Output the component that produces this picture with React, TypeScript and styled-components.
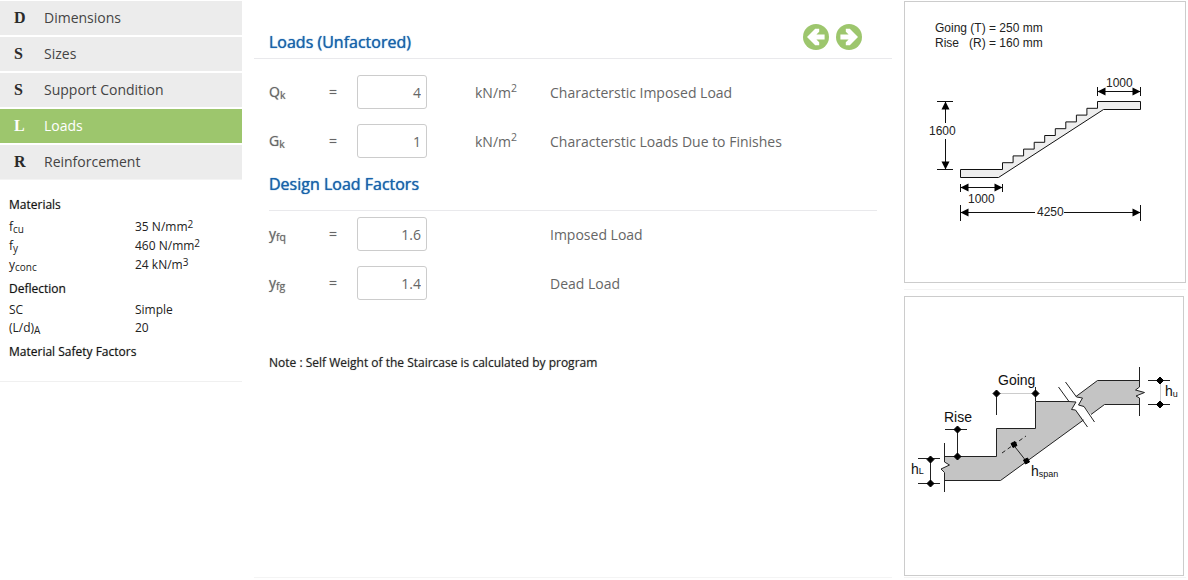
import React from "react";
import styled, { createGlobalStyle, css } from "styled-components";

const GlobalStyle = createGlobalStyle`
  *, *::before, *::after { box-sizing: border-box; }
  body {
    margin: 0;
    background: #fff;
    color: #666;
    font: 14px/20px "Open Sans", "Liberation Sans", sans-serif;
  }
  sub, sup { position: relative; font-size: 75%; line-height: 0; vertical-align: baseline; }
  sub { top: 2px; }
  sup { top: -6px; }
`;

const emphasis = css`
  font-weight: 400;
  text-shadow: 0 0 1px currentColor;
`;

const softEmphasis = css`
  font-weight: 400;
  text-shadow: 0 0 1px rgba(0, 0, 0, 0.4);
`;

const Page = styled.div`
  display: grid;
  grid-template-columns: 242px minmax(0, 1fr) 282px;
  gap: 12px;
  padding: 1px 2px 0 0;
`;

const Sidebar = styled.aside`
  min-width: 0;
`;

const Nav = styled.nav`
  display: flex;
  flex-direction: column;
  gap: 2px;
  border-bottom: 1px solid #f4f4f4;
`;

const NavLink = styled.a<{ $active?: boolean }>`
  display: grid;
  grid-template-columns: 30px 1fr;
  align-items: center;
  height: 34px;
  padding: 0 14px;
  background: ${(p) => (p.$active ? "#9dc66d" : "#ececec")};
  color: ${(p) => (p.$active ? "#fff" : "#444")};
  text-decoration: none;
`;

const Initial = styled.b<{ $active?: boolean }>`
  font: bold 16px/20px "Liberation Serif", serif;
  color: ${(p) => (p.$active ? "#fff" : "#2a2a2a")};
`;

const Summary = styled.div`
  padding: 10px 9px 17px;
  border-bottom: 1px solid #f0f0f0;
  color: #222;
  font-size: 12px;
  sup { top: -3px; }
  sub, sup { font-size: 10px; }
`;

const SummaryTitle = styled.h3`
  margin: 0;
  padding-top: 3px;
  font-size: 12px;
  line-height: 24px;
  color: #111;
  ${softEmphasis}
`;

const SummaryTable = styled.table<{ $row: number }>`
  width: 100%;
  border-collapse: collapse;
  line-height: ${(p) => p.$row}px;
  th, td { padding: 0; font-weight: 400; text-align: left; }
  th { width: 126px; }
`;

const Main = styled.main`
  border-bottom: 1px solid #f4f4f4;
`;

const MainHeader = styled.header`
  display: flex;
  align-items: flex-start;
  justify-content: space-between;
  height: 58px;
  padding: 23px 30px 0 15px;
  border-bottom: 1px solid #e9e9ec;
`;

const Title = styled.h2`
  margin: 0;
  padding-top: 6px;
  font-size: 16px;
  line-height: 24px;
  color: #1763ab;
  ${emphasis}
`;

const Pager = styled.div`
  display: flex;
  gap: 7px;
`;

const PagerButton = styled.button`
  width: 26px;
  height: 26px;
  padding: 0;
  border: 0;
  background: none;
  cursor: pointer;
  svg { display: block; }
`;

const Section = styled.section`
  padding: 0 15px;
`;

const SectionTitle = styled(Title)`
  padding: 14px 0;
  border-bottom: 1px solid #e9e9ec;
`;

const Fields = styled.div<{ $top: number }>`
  display: grid;
  gap: 15px;
  padding-top: ${(p) => p.$top}px;
`;

const FieldRow = styled.div`
  display: grid;
  grid-template-columns: 60px 28px 70px 75px 1fr;
  align-items: center;
`;

const FieldLabel = styled.label`
  ${softEmphasis}
`;

const NumberInput = styled.input`
  width: 70px;
  height: 34px;
  padding: 0 5px;
  border: 1px solid #ccc;
  border-radius: 3px;
  background: #fff;
  color: #666;
  font: inherit;
  text-align: right;
`;

const Unit = styled.span`
  padding: 2px 0 0 48px;
  white-space: nowrap;
`;

const Description = styled.span`
  padding: 2px 0 0 48px;
`;

const Note = styled.p`
  margin: 53px 0 0;
  font-size: 12px;
  color: #222;
  ${softEmphasis}
`;

const Figures = styled.aside`
  display: flex;
  flex-direction: column;
`;

const Figure = styled.figure`
  margin: 0;
  border: 1px solid #ccc;
  svg { display: block; width: 100%; height: auto; }
`;

const FigureSlot = styled.div<{ $inset?: boolean }>`
  padding: ${(p) => (p.$inset ? "6px 2px 1px 0" : "0 0 6px")};
  border-bottom: 1px solid #f4f4f4;
`;

const navItems = ["Dimensions", "Sizes", "Support Condition", "Loads", "Reinforcement"];

const ArrowIcon = ({ flip }: { flip?: boolean }) => (
  <svg width="26" height="26" viewBox="0 0 26 26" aria-hidden="true">
    <circle cx="13" cy="13" r="13" fill="#9dc66d" />
    <path
      transform={flip ? "matrix(-1 0 0 1 26 0)" : undefined}
      fill="#fff"
      d="M4 13L12.2 4.8H16.2V7.8L13.4 10.6H21.6V15.4H13.4L16.2 18.2V21.2H12.2Z"
    />
  </svg>
);

type FieldProps = { id: string; symbol: string; sub: string; value: string; unit?: boolean; text: string };

const Field = ({ id, symbol, sub, value, unit, text }: FieldProps) => (
  <FieldRow>
    <FieldLabel htmlFor={id}>
      {symbol}
      <sub>{sub}</sub>
    </FieldLabel>
    <FieldLabel as="span">=</FieldLabel>
    <NumberInput id={id} defaultValue={value} inputMode="decimal" />
    <Unit>{unit && <>kN/m<sup>2</sup></>}</Unit>
    <Description>{text}</Description>
  </FieldRow>
);

const steps = Array.from({ length: 10 }, (_, i) => {
  const x = 97.5 + i * (95 / 9);
  const y = 167.5 - (i + 1) * 6.8;
  return `V${y.toFixed(1)}H${(i === 9 ? 235.5 : x + 95 / 9).toFixed(1)}`;
}).join("");

const StairElevation = () => (
  <svg viewBox="0 0 280 280" role="img" aria-label="Staircase elevation" fontFamily="'Liberation Sans', sans-serif" fontSize="12" fill="#222">
    <text x="30" y="30">Going (T) = 250 mm</text>
    <text x="30" y="45">{"Rise\u00a0\u00a0\u00a0(R) = 160 mm"}</text>
    <path d={`M55.5 167.5H97.5${steps}V107.5H198.5L93.5 175.5H55.5Z`} fill="#eee" stroke="#111" />
    <g stroke="#111" fill="none">
      <path d="M192.5 85V94M235.5 85V94M192.5 89.5H235.5" />
      <path d="M32 99.5H48M32 167.5H48M40.5 99.5V121M40.5 137V167.5" />
      <path d="M55.5 182V190M97.5 182V190M55.5 185.5H97.5" />
      <path d="M55.5 203V219M235.5 203V219M55.5 210.5H130M159 210.5H235.5" />
    </g>
    <g fill="#000">
      <path d="M192.5 89.5l8-4v8zM235.5 89.5l-8-4v8z" />
      <path d="M40.5 99.5l-4 8h8zM40.5 167.5l-4-8h8z" />
      <path d="M55.5 185.5l8-4v8zM97.5 185.5l-8-4v8z" />
      <path d="M55.5 210.5l8-4v8zM235.5 210.5l-8-4v8z" />
    </g>
    <text x="201" y="85">1000</text>
    <text x="24" y="133">1600</text>
    <text x="63" y="201">1000</text>
    <text x="132" y="214">4250</text>
  </svg>
);

const Dot = ({ x, y }: { x: number; y: number }) => (
  <path d={`M${x - 3.5} ${y}L${x} ${y - 3.5}L${x + 3.5} ${y}L${x} ${y + 3.5}Z`} fill="#000" strokeLinejoin="round" />
);

const StairDetail = () => (
  <svg viewBox="0 0 278 278" role="img" aria-label="Staircase detail" fontFamily="'Liberation Sans', sans-serif" fill="#111">
    <path fill="#c4c4c4" d="M39.5 159.5H91.5V131.5H130.5V104.5H164L171 105L166.5 112.5L170.5 113L178.5 123L95.5 183.5H39.5V175.5L36 172L44.5 168L39.5 165Z" />
    <path fill="#c4c4c4" d="M171 99.5L192.5 83.5H234.5V90L230.5 93L239.5 95.5L231 99L234.5 101V107.5H199.5L186 117.5L179 109.5L173.5 108L177.5 101Z" />
    <g stroke="#222" fill="none">
      <path d="M39.5 159.5H91.5V131.5H130.5V104.5H164M39.5 183.5H95.5L178.5 123M171 99.5L192.5 83.5H234.5M186 117.5L199.5 107.5H234.5" />
      <path d="M39.5 146V165L44.5 168L36 172L39.5 175.5V195" />
      <path d="M234.5 70V90L230.5 93L239.5 95.5L231 99L234.5 101V119" />
      <path d="M153.5 90L164 104.5L171 105L166.5 112.5L170.5 113L182.5 130" />
      <path d="M160.5 85L171.5 100L177.5 101L173.5 108L179 109.5L189.5 125" />
      <path d="M13 161.5H35M13 186.5H35M25.5 161.5V186.5M40 132.5H62M52.5 132.5V159.5" />
      <path d="M91.5 96.5V118M130.5 90V104M243 83.5H265M243 107.5H265M108.5 148L121.5 164.5" />
      <path d="M91.5 96.5H130.5M255.5 83.5V107.5" stroke="#ccc" />
      <path d="M97 156L121 139" strokeDasharray="4 3" />
    </g>
    <g stroke="#000">
      <Dot x={25.5} y={162.5} />
      <Dot x={25.5} y={186.5} />
      <Dot x={52.5} y={132.5} />
      <Dot x={52.5} y={159.5} />
      <Dot x={91.5} y={96.5} />
      <Dot x={130.5} y={96.5} />
      <Dot x={255} y={83.5} />
      <Dot x={255} y={107.5} />
      <path d="M106 146.5l4-2 2 4-4 2zM118.5 163l4-2 2 4-4 2z" fill="#000" />
    </g>
    <g fontSize="14">
      <text x="93" y="88">Going</text>
      <text x="39" y="125">Rise</text>
      <text x="6" y="177">h<tspan fontSize="9">L</tspan></text>
      <text x="126" y="179">h<tspan fontSize="9" dy="1">span</tspan></text>
      <text x="260" y="99">h<tspan fontSize="9" dy="1">u</tspan></text>
    </g>
  </svg>
);

export default function App() {
  return (
    <>
      <GlobalStyle />
      <Page>
        <Sidebar>
          <Nav>
            {navItems.map((item) => (
              <NavLink key={item} href={`#${item}`} $active={item === "Loads"}>
                <Initial $active={item === "Loads"}>{item[0]}</Initial>
                {item}
              </NavLink>
            ))}
          </Nav>
          <Summary>
            <SummaryTitle>Materials</SummaryTitle>
            <SummaryTable $row={19}>
              <tbody>
                <tr><th scope="row">f<sub>cu</sub></th><td>35 N/mm<sup>2</sup></td></tr>
                <tr><th scope="row">f<sub>y</sub></th><td>460 N/mm<sup>2</sup></td></tr>
                <tr><th scope="row">y<sub>conc</sub></th><td>24 kN/m<sup>3</sup></td></tr>
              </tbody>
            </SummaryTable>
            <SummaryTitle>Deflection</SummaryTitle>
            <SummaryTable $row={18}>
              <tbody>
                <tr><th scope="row">SC</th><td>Simple</td></tr>
                <tr><th scope="row">(L/d)<sub>A</sub></th><td>20</td></tr>
              </tbody>
            </SummaryTable>
            <SummaryTitle>Material Safety Factors</SummaryTitle>
          </Summary>
        </Sidebar>

        <Main>
          <MainHeader>
            <Title>Loads (Unfactored)</Title>
            <Pager>
              <PagerButton type="button" aria-label="Previous"><ArrowIcon /></PagerButton>
              <PagerButton type="button" aria-label="Next"><ArrowIcon flip /></PagerButton>
            </Pager>
          </MainHeader>
          <Section>
            <Fields $top={16}>
              <Field id="qk" symbol="Q" sub="k" value="4" unit text="Characterstic Imposed Load" />
              <Field id="gk" symbol="G" sub="k" value="1" unit text="Characterstic Loads Due to Finishes" />
            </Fields>
            <SectionTitle>Design Load Factors</SectionTitle>
            <Fields $top={6}>
              <Field id="yfq" symbol="y" sub="fq" value="1.6" text="Imposed Load" />
              <Field id="yfg" symbol="y" sub="fg" value="1.4" text="Dead Load" />
            </Fields>
            <Note>Note : Self Weight of the Staircase is calculated by program</Note>
          </Section>
        </Main>

        <Figures>
          <FigureSlot>
            <Figure><StairElevation /></Figure>
          </FigureSlot>
          <FigureSlot $inset>
            <Figure><StairDetail /></Figure>
          </FigureSlot>
        </Figures>
      </Page>
    </>
  );
}
